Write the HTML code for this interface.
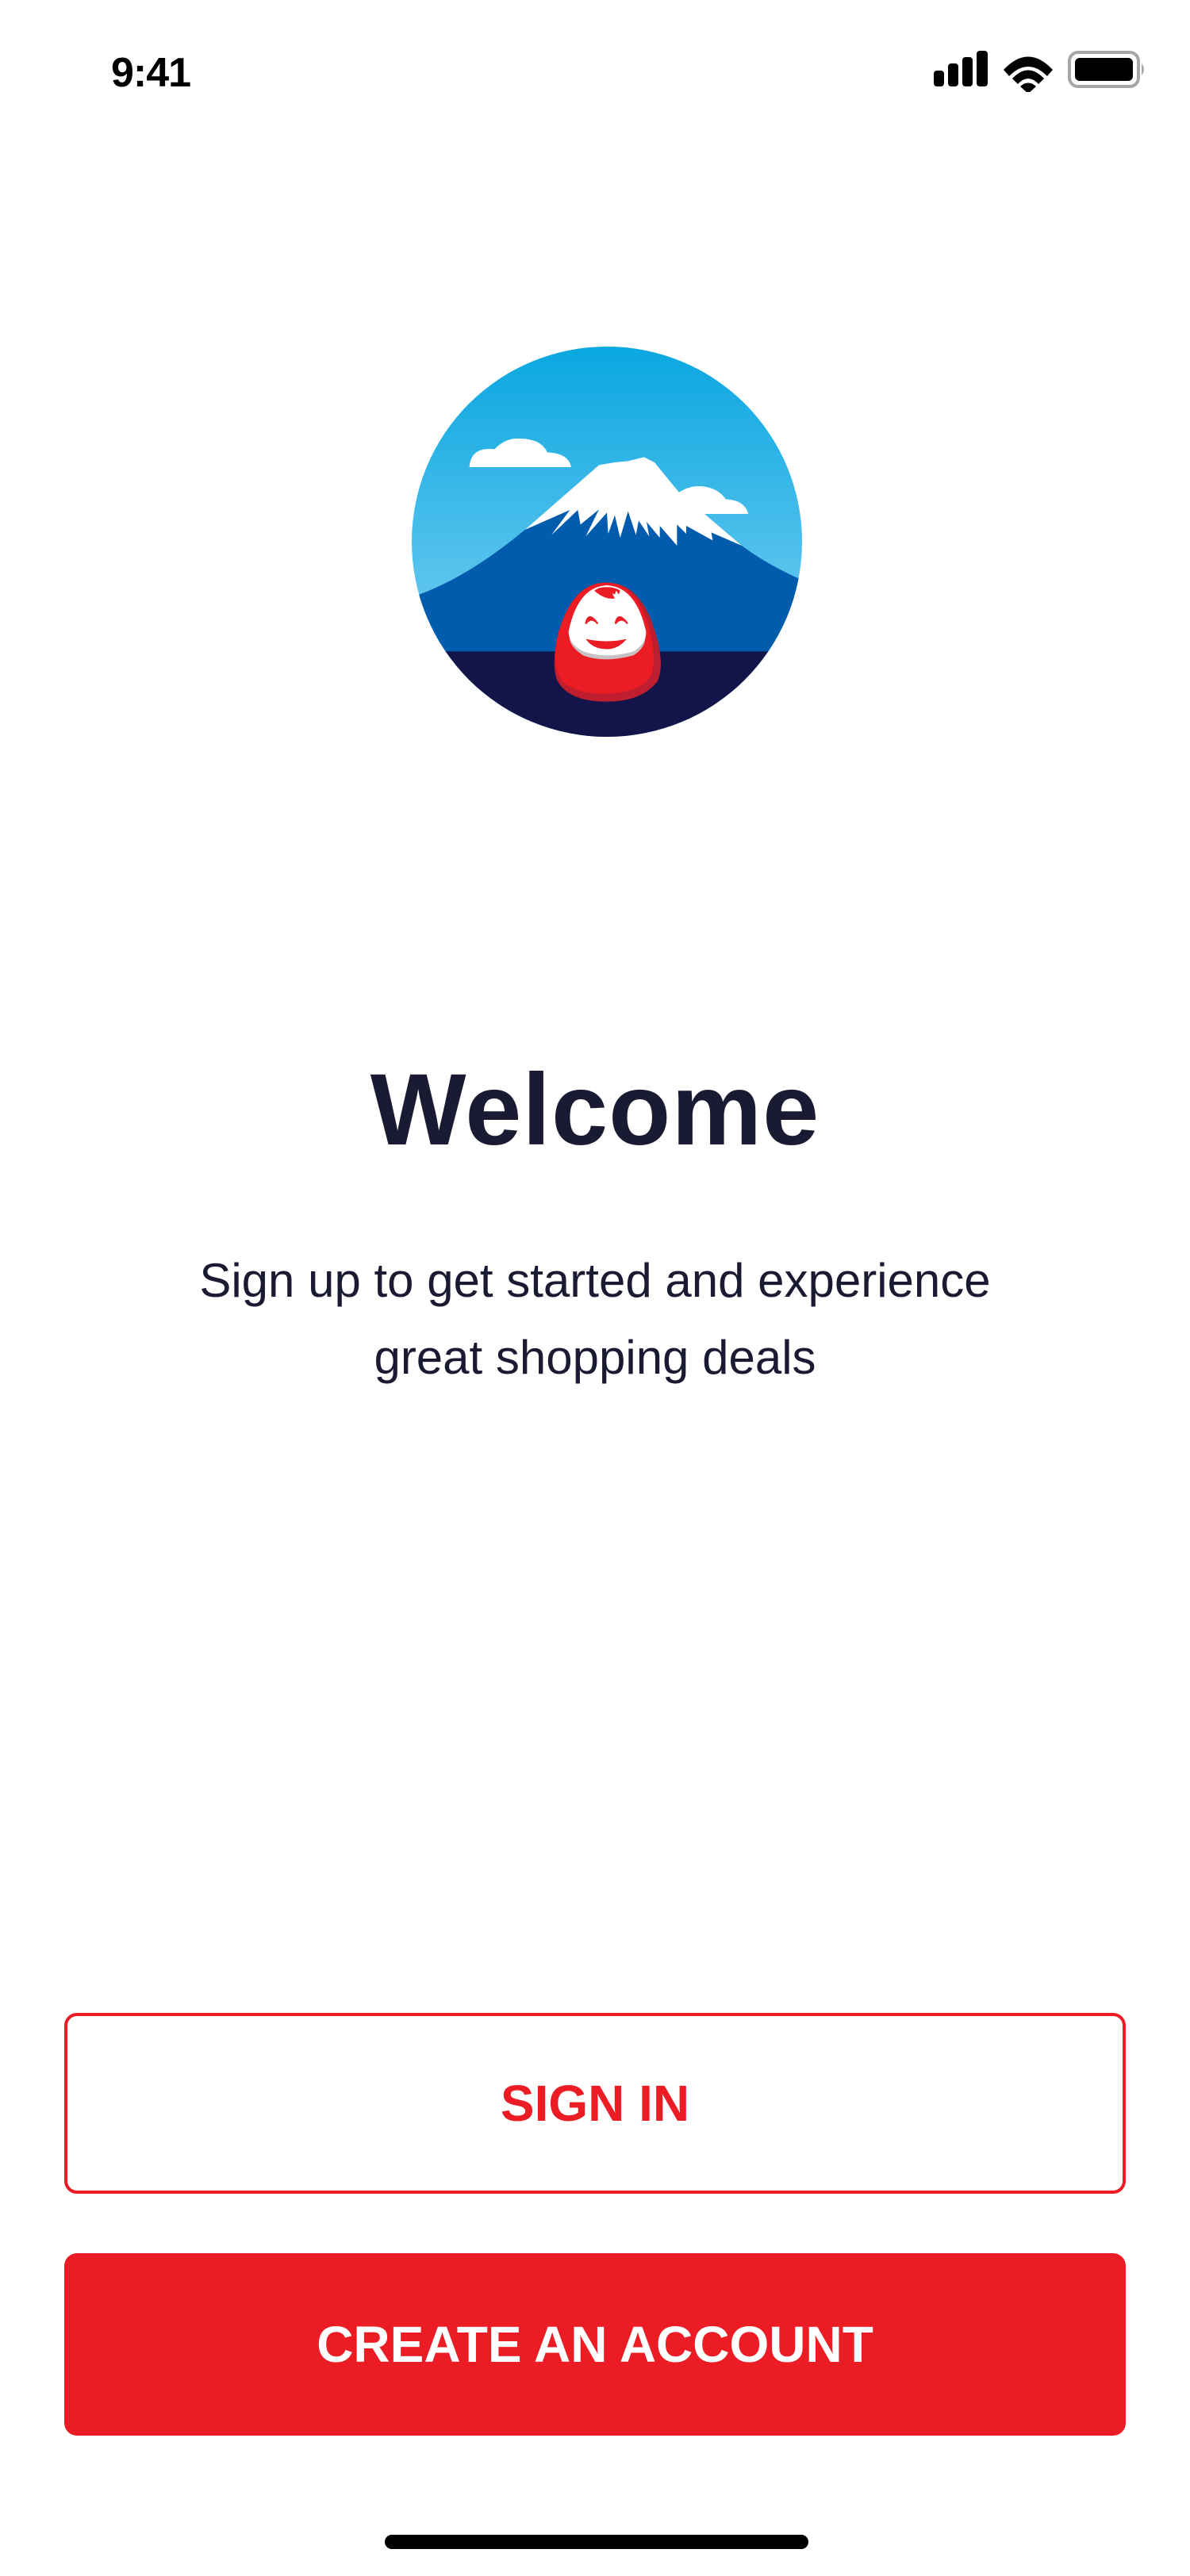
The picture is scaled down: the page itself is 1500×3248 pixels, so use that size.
<!DOCTYPE html>
<html><head><meta charset="utf-8"><style>
*{margin:0;padding:0;box-sizing:border-box}
body{width:1500px;height:3248px;background:#fff;position:relative;overflow:hidden;font-family:"Liberation Sans",sans-serif;color:#1b1a33}
.abs{position:absolute}
.time{left:140px;top:62px;font-size:52px;font-weight:700;letter-spacing:-1px;color:#000}
h1{position:absolute;left:0;width:1500px;top:1326px;text-align:center;font-size:128px;font-weight:700;color:#1b1a33;letter-spacing:1px}
.sub{position:absolute;left:0;width:1500px;top:1566px;text-align:center;font-size:60px;line-height:97px;color:#1b1a33}
.btn{position:absolute;left:81px;width:1338px;border-radius:16px;display:flex;align-items:center;justify-content:center;font-weight:700;font-size:64px}
.b1{top:2538px;height:228px;border:4px solid #ec1c24;color:#ec1c24}
.b2{top:2841px;height:230px;background:#ec1c24;color:#fff}
.home{left:485px;top:3196px;width:534px;height:18px;border-radius:9px;background:#000}
</style></head><body>
<div class="abs time">9:41</div>
<svg class="abs" style="left:1170px;top:60px" width="280" height="56" viewBox="1170 60 280 56">
<rect x="1177" y="89" width="13" height="20" rx="4"/>
<rect x="1195" y="80" width="13" height="29" rx="4"/>
<rect x="1213" y="72" width="13" height="37" rx="4"/>
<rect x="1231" y="64" width="14" height="45" rx="4"/>
<path d="M1265 88 Q1296 55 1327 88 L1320 96 Q1296 72 1272 96Z"/>
<path d="M1276 99 Q1296 78 1316 99 L1309 106 Q1296 92 1283 106Z"/>
<path d="M1286 109 Q1296 100 1306 109 L1296 118Z"/>
<rect x="1348" y="66" width="87" height="43" rx="11" fill="none" stroke="#a6a6a6" stroke-width="4"/>
<rect x="1355" y="73" width="73" height="29" rx="6"/>
<path d="M1439 80 Q1445 87.5 1439 95Z" fill="#a6a6a6"/>
</svg>
<svg class="abs" style="left:519px;top:437px" width="492" height="492" viewBox="32 52 1476 1476">
<defs>
<linearGradient id="sky" x1="0" y1="0" x2="0" y2="1"><stop offset="0" stop-color="#05a5df"/><stop offset="0.6" stop-color="#5ac4ee"/></linearGradient>
<clipPath id="c"><circle cx="770" cy="790" r="738"/></clipPath>
</defs>
<g clip-path="url(#c)">
<rect x="0" y="0" width="1600" height="1600" fill="url(#sky)"/>
<path d="M60 990 Q250 920 460 745 L740 500 L950 490 L1040 600 L1280 805 Q1380 880 1520 940 L1520 1210 L0 1210Z" fill="#025cad"/>
<rect x="0" y="1205" width="1600" height="400" fill="#12144a"/>
<path d="M460 745 L740 500 L800 490 L850 485 L910 470 L950 490 L1040 600 L1280 805 L1165 755 L1170 785 L1070 730 L1070 760 L1035 725 L1035 805 L970 730 L970 775 L920 715 L930 770 L890 710 L880 765 L850 675 L820 775 L800 690 L775 760 L770 680 L690 770 L740 668 L670 725 L660 670 L560 765 L630 670 Z" fill="#fff"/>
<path d="M250 508 Q255 430 345 440 Q390 395 440 400 Q520 400 545 452 Q625 455 635 508Z" fill="#fff"/>
<path d="M1040 605 Q1080 578 1125 580 Q1190 585 1220 630 Q1290 632 1305 685 L1125 685Z" fill="#fff"/>
<path d="M770 945 Q900 945 955 1140 Q990 1260 960 1320 Q900 1395 770 1395 Q620 1395 580 1310 Q560 1250 585 1140 Q640 945 770 945Z" fill="#be1e2d"/>
<path d="M765 945 Q890 945 935 1140 Q965 1270 920 1320 Q860 1365 760 1365 Q640 1365 595 1310 Q560 1250 585 1140 Q640 945 765 945Z" fill="#ec1c24"/>
<path d="M630 1140 Q620 1180 680 1220 Q760 1250 870 1220 Q920 1190 915 1140 Q880 965 770 960 Q660 965 630 1140Z" fill="#c8c0c2"/>
<path d="M625 1130 Q625 1175 680 1205 Q770 1235 870 1205 Q920 1175 918 1130 Q880 960 770 955 Q660 960 625 1130Z" fill="#fff"/>
<path d="M722 975 Q760 1010 800 1005 L790 985 L800 990 L805 975 L815 990 L820 975 Q790 955 740 965Z" fill="#ec1c24"/>
<path d="M690 1100 Q700 1050 735 1100 Q712 1072 690 1100Z" fill="#ec1c24" stroke="#ec1c24" stroke-width="6"/>
<path d="M802 1100 Q812 1050 848 1100 Q825 1072 802 1100Z" fill="#ec1c24" stroke="#ec1c24" stroke-width="6"/>
<path d="M690 1158 Q770 1175 845 1158 Q810 1200 765 1196 Q715 1195 690 1158Z" fill="#ec1c24"/>
</g>
</svg>
<h1>Welcome</h1>
<div class="sub">Sign up to get started and experience<br>great shopping deals</div>
<div class="btn b1">SIGN IN</div>
<div class="btn b2">CREATE AN ACCOUNT</div>
<div class="abs home"></div>
</body></html>
